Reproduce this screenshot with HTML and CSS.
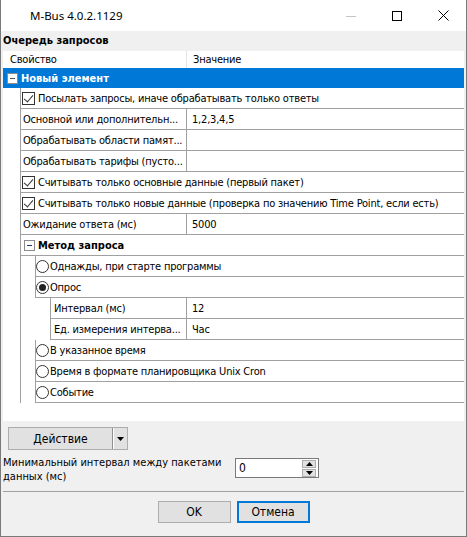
FILE: index.html
```html
<!DOCTYPE html>
<html lang="ru">
<head>
  <meta charset="UTF-8">
  <title>M-Bus 4.0.2.1129</title>
  <link rel="stylesheet" href="styles.css">
</head>
<body>
  <div class="window">
    <div class="titlebar">
      <span class="title">M-Bus 4.0.2.1129</span>
      <div class="winbtns">
        <span class="winbtn"><svg width="10" height="10"><line x1="0" y1="5.5" x2="10" y2="5.5" stroke="#c4c4c4"/></svg></span>
        <span class="winbtn"><svg width="10" height="10"><rect x="0.5" y="0.5" width="9" height="9" fill="none" stroke="#000"/></svg></span>
        <span class="winbtn"><svg width="11" height="11"><path d="M0.5 0.5L10.5 10.5M10.5 0.5L0.5 10.5" stroke="#000"/></svg></span>
      </div>
    </div>

    <div class="content">
      <div class="caption">Очередь запросов</div>

      <div class="grid">
        <div class="grid-head">
          <div class="hname">Свойство</div>
          <div class="hval">Значение</div>
        </div>
        <div class="category"><span class="toggle light"></span>Новый элемент</div>

        <div class="tree">
          <div class="row lvl1"><span class="cb checked"></span>Посылать запросы, иначе обрабатывать только ответы</div>
          <div class="row lvl1"><div class="name">Основной или дополнительн...</div><div class="val">1,2,3,4,5</div></div>
          <div class="row lvl1"><div class="name">Обрабатывать области памят...</div><div class="val"></div></div>
          <div class="row lvl1"><div class="name">Обрабатывать тарифы (пусто...</div><div class="val"></div></div>
          <div class="row lvl1"><span class="cb checked"></span>Считывать только основные данные (первый пакет)</div>
          <div class="row lvl1"><span class="cb checked"></span>Считывать только новые данные (проверка по значению Time Point, если есть)</div>
          <div class="row lvl1"><div class="name">Ожидание ответа (мс)</div><div class="val">5000</div></div>
          <div class="row lvl1 group"><span class="toggle"></span>Метод запроса</div>
          <div class="row lvl2"><span class="rb"></span>Однажды, при старте программы</div>
          <div class="row lvl2"><span class="rb on"></span>Опрос</div>
          <div class="row lvl3"><div class="name">Интервал (мс)</div><div class="val">12</div></div>
          <div class="row lvl3"><div class="name">Ед. измерения интерва...</div><div class="val">Час</div></div>
          <div class="row lvl2"><span class="rb"></span>В указанное время</div>
          <div class="row lvl2"><span class="rb"></span>Время в формате планировщика Unix Cron</div>
          <div class="row lvl2"><span class="rb"></span>Событие</div>
        </div>
      </div>

      <div class="actions">
        <div class="split">
          <span class="split-main">Действие</span>
          <span class="split-arrow"><svg width="7" height="4"><path d="M0 0H7L3.5 4Z" fill="#000"/></svg></span>
        </div>
      </div>

      <div class="interval">
        <label class="interval-label">Минимальный интервал между пакетами данных (мс)</label>
        <div class="spin">
          <span class="spin-value">0</span>
          <div class="spin-btns">
            <span class="spin-btn"><svg width="7" height="4"><path d="M0 4H7L3.5 0Z" fill="#000"/></svg></span>
            <span class="spin-btn"><svg width="7" height="4"><path d="M0 0H7L3.5 4Z" fill="#000"/></svg></span>
          </div>
        </div>
      </div>

      <div class="sep"></div>

      <div class="footer">
        <button class="btn">OK</button>
        <button class="btn default">Отмена</button>
      </div>
    </div>
  </div>
</body>
</html>
```

FILE: styles.css
```css
* { margin: 0; padding: 0; box-sizing: border-box; }
body {
  background: #fff;
  font-family: "DejaVu Sans Condensed", "Liberation Sans", sans-serif;
  font-size: 11px;
  color: #000;
}
.window {
  width: 467px;
  height: 537px;
  border: 1px solid #7a7a7a;
  border-top: 0;
  background: #f0f0f0;
  display: flex;
  flex-direction: column;
}
.titlebar {
  height: 31px;
  background: #fff;
  display: flex;
  align-items: center;
  flex-shrink: 0;
}
.title {
  flex: 1;
  padding-left: 29px;
  font-family: "Noto Sans", sans-serif;
  font-size: 11.5px;
}
.winbtns { display: flex; align-self: stretch; }
.winbtn {
  width: 46px;
  display: flex;
  align-items: center;
  justify-content: center;
}

.content {
  padding: 0 2px;
  display: flex;
  flex-direction: column;
}
.caption {
  height: 20px;
  line-height: 20px;
  font-weight: bold;
}

/* property grid */
.grid {
  height: 370px;
  background: #fff;
  letter-spacing: -0.2px;
}
.grid-head {
  height: 17px;
  line-height: 17px;
  display: flex;
}
.hname {
  width: 184px;
  padding-left: 7px;
  border-right: 1px solid #e5e5e5;
}
.hval { padding-left: 6px; }
.category {
  height: 20px;
  background: #0078d7;
  color: #fff;
  font-weight: bold;
  display: flex;
  align-items: center;
  letter-spacing: 0;
}
.category .toggle { margin: 0 3px 0 4px; }
.toggle {
  width: 11px;
  height: 11px;
  border: 1px solid #8c8c8c;
  background: #fff;
  position: relative;
  flex-shrink: 0;
}
.toggle::after {
  content: "";
  position: absolute;
  left: 2px;
  top: 4px;
  width: 5px;
  height: 1px;
  background: #1e3f73;
}
.toggle.light::after { background: #555; }

.tree {
  margin-left: 17px;
  border-left: 1px solid #a0a0a0;
}
.row {
  height: 21px;
  border-bottom: 1px solid #a0a0a0;
  display: flex;
  align-items: center;
  white-space: nowrap;
}
.lvl2, .lvl3 { border-left: 1px solid #a0a0a0; }
.lvl2 { margin-left: 14px; }
.lvl3 { margin-left: 29px; }
.name {
  align-self: stretch;
  display: flex;
  align-items: center;
  border-right: 1px solid #a0a0a0;
  overflow: hidden;
}
.lvl1 .name { width: 166px; padding-left: 2px; }
.lvl3 .name { width: 136px; padding-left: 3px; }
.val { padding-left: 5px; }
.group { font-weight: bold; letter-spacing: 0; }
.group .toggle { margin: 0 3px 0 3px; }

.cb {
  width: 13px;
  height: 13px;
  border: 1px solid #333;
  margin: 0 3px 0 1px;
  flex-shrink: 0;
  position: relative;
}
.cb.checked::after {
  content: "";
  position: absolute;
  left: 3px;
  top: 0px;
  width: 4px;
  height: 8px;
  border-right: 1.3px solid #333;
  border-bottom: 1.3px solid #333;
  transform: rotate(40deg);
}
.rb {
  width: 13px;
  height: 13px;
  border: 1px solid #333;
  border-radius: 50%;
  margin: 0 1px 0 0;
  flex-shrink: 0;
  position: relative;
}
.rb.on::after {
  content: "";
  position: absolute;
  left: 2px;
  top: 2px;
  width: 7px;
  height: 7px;
  border-radius: 50%;
  background: #222;
}

/* bottom controls */
.actions { padding: 6px 0 0 5px; }
.split {
  width: 120px;
  height: 23px;
  background: #e1e1e1;
  border: 1px solid #adadad;
  display: flex;
  font-size: 12px;
}
.split-main {
  width: 104px;
  display: flex;
  align-items: center;
  justify-content: center;
  border-right: 1px solid #8f8f8f;
  box-shadow: 1px 0 0 #fff;
}
.split-arrow {
  flex: 1;
  display: flex;
  align-items: center;
  justify-content: center;
}
.interval {
  margin-top: 6px;
  display: flex;
  align-items: flex-start;
  font-size: 11px;
}
.interval-label {
  width: 232px;
  line-height: 14px;
}
.spin {
  margin-top: 2px;
  width: 84px;
  height: 20px;
  border: 1px solid #7a7a7a;
  background: #fff;
  display: flex;
  align-items: center;
  font-size: 12px;
}
.spin-value { flex: 1; padding-left: 3px; }
.spin-btns {
  display: flex;
  flex-direction: column;
  gap: 1px;
  margin-right: 2px;
}
.spin-btn {
  width: 14px;
  height: 8px;
  background: #e1e1e1;
  border: 1px solid #adadad;
  display: flex;
  align-items: center;
  justify-content: center;
}
.sep {
  margin-top: 7px;
  border-top: 1px solid #a0a0a0;
}
.footer {
  margin-top: 9px;
  display: flex;
  justify-content: center;
  gap: 6px;
}
.btn {
  width: 73px;
  height: 22px;
  background: #e1e1e1;
  border: 1px solid #adadad;
  font-family: inherit;
  font-size: 12px;
  color: #000;
}
.btn.default { border: 2px solid #0078d7; }
```
